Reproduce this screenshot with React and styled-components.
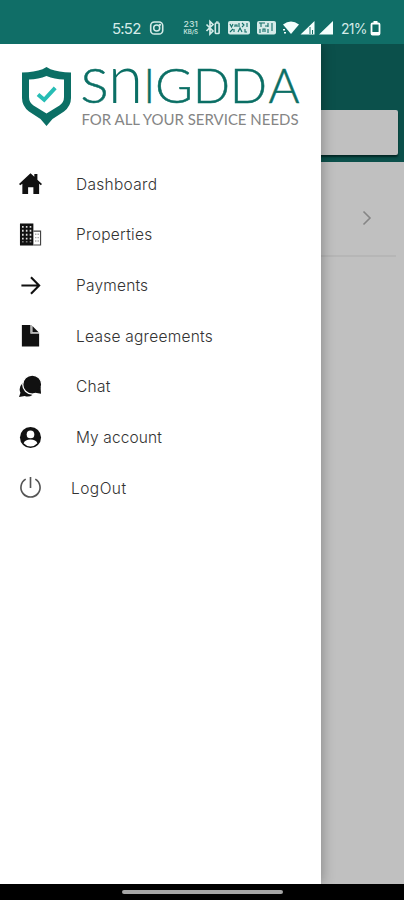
import React from 'react'

import styled, { createGlobalStyle } from 'styled-components'


const GlobalStyle = createGlobalStyle`
*{
    box-sizing:border-box;
}
body{
    margin:0;
    background-color:#fff;
    font-family:Inter, "Liberation Sans", sans-serif;
}
`

const StatusIcons = () => {
  return (
    <svg width='186' height='24' viewBox='148 16 186 24' fill='none' stroke='#d5ebe8' strokeWidth='1.3'>
        <rect x='150.7' y='22' width='12' height='12' rx='3.6' strokeWidth='1.6' />
        <circle cx='156.7' cy='28' r='3' strokeWidth='1.5' />
        <circle cx='160' cy='24.8' r='.5' />
        <g fill='#c5e2de' stroke='none' fontFamily='Inter, sans-serif'>
            <text x='183.5' y='27.3' fontSize='7.5' fontWeight='500' textLength='14.5' lengthAdjust='spacingAndGlyphs'>231</text>
            <text x='183.5' y='33.8' fontSize='5.5' fontWeight='600' textLength='14.5' lengthAdjust='spacingAndGlyphs'>KB/S</text>
        </g>
        <path d='M206.5 24.5l6.500 6.500-3 3V21.500l3 3-6.500 6.500' strokeWidth='1.700' />
        <rect x='215.300' y='23' width='3.800' height='10.500' rx='.8' strokeWidth='1.600' />
        <path d='M216 22h2.500' />
        <rect x='228' y='21' width='22' height='13.500' rx='2' fill='#d5ebe8' stroke='none' />
        <rect x='257' y='21' width='19' height='13.500' rx='2' fill='#d5ebe8' stroke='none' />
        <g stroke='#106e67' strokeWidth='1.100'>
            <path d='M230 24l1.500 3 1.500-3M235 27v-2h2v2M239 23v4M242 23l2 2-2 2M247 23v4M230 32l3-3M234 29v3M238 32l2-4 2 4M245 29v3h2' />
            <path d='M259 23h6M261 23v4M265 26h3M268 23v4M272 23v8M260 29v4M263 32v-3h2v3M268 29v4' />
        </g>
        <g fill='#f4fffd' stroke='none'>
            <path d='M283 24.500q8-6 16 0L291 34z' />
            <path d='M283 29h2v1.500h-2zM284 32h2v1.500h-2z' />
            <path d='M314.500 21v13.500h-14zM333 21v13.500h-14z' />
        </g>
        <path d='M310 27v7M312.500 30v4' stroke='#106e67' strokeWidth='1' />
    </svg>
  )
}

const Logo = () => {
  return (
    <svg width='282' height='86' viewBox='20 44 282 86'>
        <path d='M46.500 67l4 2.200q8 3 20.500 3.300v25.500q0 8-7 13.500l-11.500 7.500-6 7-6-7L29 111.500q-7-5.500-7-13.500V72.500q12.500-.3 20.500-3.300z' fill='#0b6f65' />
        <path d='M46.500 76q8 3.400 17.500 3.500V97q0 5.500-4.500 8.500l-13 8-13-8Q29 102.500 29 97V79.500q9.500-.1 17.500-3.500z' fill='#fff' />
        <path d='M38 94.500l6.200 5.300 11-12' fill='none' stroke='#27bdb5' strokeWidth='4' />
        <g fill='#0b6f65' stroke='#0b6f65' strokeWidth='.5' fontFamily='Lato, sans-serif' fontWeight='300' fontSize='48'>
            <text x='80.500' y='102.500' textLength='28' lengthAdjust='spacingAndGlyphs'>S</text>
            <text x='108' y='102.500' fontSize='68' strokeWidth='0' textLength='35' lengthAdjust='spacingAndGlyphs'>n</text>
            <text x='143.500' y='102.500' textLength='11.500' lengthAdjust='spacingAndGlyphs'>I</text>
            <text x='155' y='102.500' textLength='38' lengthAdjust='spacingAndGlyphs'>G</text>
            <text x='193' y='102.500' textLength='37' lengthAdjust='spacingAndGlyphs'>D</text>
            <text x='230' y='102.500' textLength='37' lengthAdjust='spacingAndGlyphs'>D</text>
            <text x='268.500' y='102.500' textLength='31' lengthAdjust='spacingAndGlyphs'>A</text>
        </g>
        <text x='81.500' y='124.700' fill='#858585' fontFamily='Lato, sans-serif' fontSize='15.500' textLength='217' lengthAdjust='spacingAndGlyphs'>FOR ALL YOUR SERVICE NEEDS</text>
    </svg>
  )
}

const icons = {
  home: (
    <path d='M12 1.300L16 5V2h3.200v6L24 12.500l-1.200 1.300L21 12.300V23h-6v-7H9.500v7H3.500V12.300l-2.200 1.500L0 12.500z' />
  ),
  building: (
    <>
        <path d='M1 .5h14v23H1z' />
        <path d='M15 8.500h7.500v14.500H15' fill='none' stroke='#444' strokeWidth='1.200' />
        <path d='M4 3v17M8 3v17M12 3v17' stroke='#ddd' strokeWidth='1.700' strokeDasharray='2 2.100' />
        <path d='M17.500 11v9M20 11v9' stroke='#999' strokeWidth='1.200' strokeDasharray='1.500 2' />
    </>
  ),
  arrow: (
    <path d='M2.500 12h18M12.500 3.500l8.500 8.500-8.500 8.500' fill='none' stroke='#111' strokeWidth='2.200' />
  ),
  file: (
    <>
        <path d='M3 1h9v9h9v13.500H3z' />
        <path d='M14 2l6.500 6.500H14z' />
        <path d='M12.700 1v8.500H21' fill='none' stroke='#aaa' strokeWidth='1.400' />
    </>
  ),
  chat: (
    <>
        <path d='M4 8Q-1 13 1.500 18.500L0 23l6-1.200q4 1.700 8-1z' />
        <circle cx='13.800' cy='10' r='9.900' stroke='#fff' strokeWidth='1.300' />
        <path d='M17 18.500l6 1-.5-7z' />
    </>
  ),
  account: (
    <>
        <circle cx='12' cy='12' r='11' />
        <circle cx='12' cy='8.800' r='4' fill='#fff' />
        <path d='M4.800 18q1.500-3.800 7.200-3.800t7.200 3.800q-3 3.300-7.200 3.300t-7.200-3.300z' fill='#fff' />
    </>
  ),
  power: (
    <path d='M12 1v11.500M7 3.300a10 10 0 1 0 10 0' fill='none' stroke='#555' strokeWidth='1.700' />
  ),
}

const menu = [
  { icon: 'home', label: 'Dashboard', spacing: '0.3px' },
  { icon: 'building', label: 'Properties', spacing: '0.3px' },
  { icon: 'arrow', label: 'Payments', spacing: '0.2px' },
  { icon: 'file', label: 'Lease agreements', spacing: '0.25px' },
  { icon: 'chat', label: 'Chat', spacing: '0.3px' },
  { icon: 'account', label: 'My account', spacing: '0.1px' },
  { icon: 'power', label: 'LogOut', spacing: '0.45px', near: true },
]

const App = () => {
  return (
    <Screen>
        <GlobalStyle />
        <StatusBar>
            <Clock>5:52</Clock>
            <StatusIcons />
            <Percent>21%</Percent>
            <svg width='11' height='15' viewBox='0 0 11 15'>
                <path d='M3.500 1h4' stroke='#fff' strokeWidth='2' />
                <rect x='1.500' y='2.500' width='8' height='11' rx='1' fill='none' stroke='#fff' strokeWidth='1.800' />
                <path d='M2 12h7' stroke='#fff' strokeWidth='2' />
            </svg>
        </StatusBar>
        <Content>
            <Header>
                <SearchCard />
            </Header>
            <ListRow>
                <svg width='10' height='16' viewBox='0 0 10 16'>
                    <path d='M1.500 1.500L8 8l-6.500 6.500' fill='none' stroke='#858585' strokeWidth='1.600' />
                </svg>
            </ListRow>
            <Drawer>
                <Logo />
                <Menu>
                    {menu.map((item) => (
                        <MenuItem key={item.label} $near={item.near} $spacing={item.spacing}>
                            <svg width='23' height='23' viewBox='0 0 24 24' fill='#111'>{icons[item.icon]}</svg>
                            <span>{item.label}</span>
                        </MenuItem>
                    ))}
                </Menu>
            </Drawer>
        </Content>
        <NavBar>
            <Handle />
        </NavBar>
    </Screen>
  )
}

const Screen=styled.div`
    width:404px;
    height:900px;
    display:flex;
    flex-direction:column;
    overflow:hidden;
`
const StatusBar=styled.div`
    height:44px;
    flex:none;
    display:flex;
    align-items:center;
    padding:12px 0 0 112px;
    background-color:#106e67;
    color:#d5ebe8;
    svg{
        flex:none;
    }
`
const Clock=styled.span`
    width:36px;
    font-size:15px;
    letter-spacing:-0.8px;
`
const Percent=styled.span`
    width:29px;
    margin-left:7px;
    font-size:14px;
    letter-spacing:-0.8px;
`
const Content=styled.main`
    position:relative;
    flex:1;
    overflow:hidden;
    background-color:#c0c0c0;
`
const Header=styled.header`
    height:118px;
    padding:66px 6.5px 0;
    background-color:#0b504b;
`
const SearchCard=styled.div`
    height:45px;
    border-radius:2px;
    background-color:#c0c0c0;
    box-shadow:0 2px 2px rgba(0, 30, 28, 0.8);
`
const ListRow=styled.div`
    height:95px;
    margin:0 8px;
    padding:19px 24px 0 0;
    display:flex;
    align-items:center;
    justify-content:flex-end;
    border-bottom:2px solid #b6b6b6;
`
const Drawer=styled.aside`
    position:absolute;
    top:0;
    bottom:0;
    left:0;
    width:320.5px;
    padding-left:20px;
    background-color:#fff;
    box-shadow:1px 0 12px rgba(0, 0, 0, 0.3);
    svg{
        display:block;
    }
`
const Menu=styled.nav`
    display:flex;
    flex-direction:column;
    padding-top:28.5px;
`
const MenuItem=styled.a`
    height:50.65px;
    display:flex;
    align-items:center;
    gap:${(props) => (props.$near ? '29.5px' : '34.5px')};
    margin-left:-1.5px;
    color:#333;
    font-size:15.5px;
    font-weight:300;
    letter-spacing:${(props) => props.$spacing};
    white-space:nowrap;
    span{
        padding-top:1px;
    }
`
const NavBar=styled.footer`
    height:16px;
    flex:none;
    display:flex;
    align-items:center;
    justify-content:center;
    background-color:#000;
`
const Handle=styled.div`
    width:161px;
    height:4px;
    border-radius:2px;
    background-color:#a5a5a5;
`

export default App
